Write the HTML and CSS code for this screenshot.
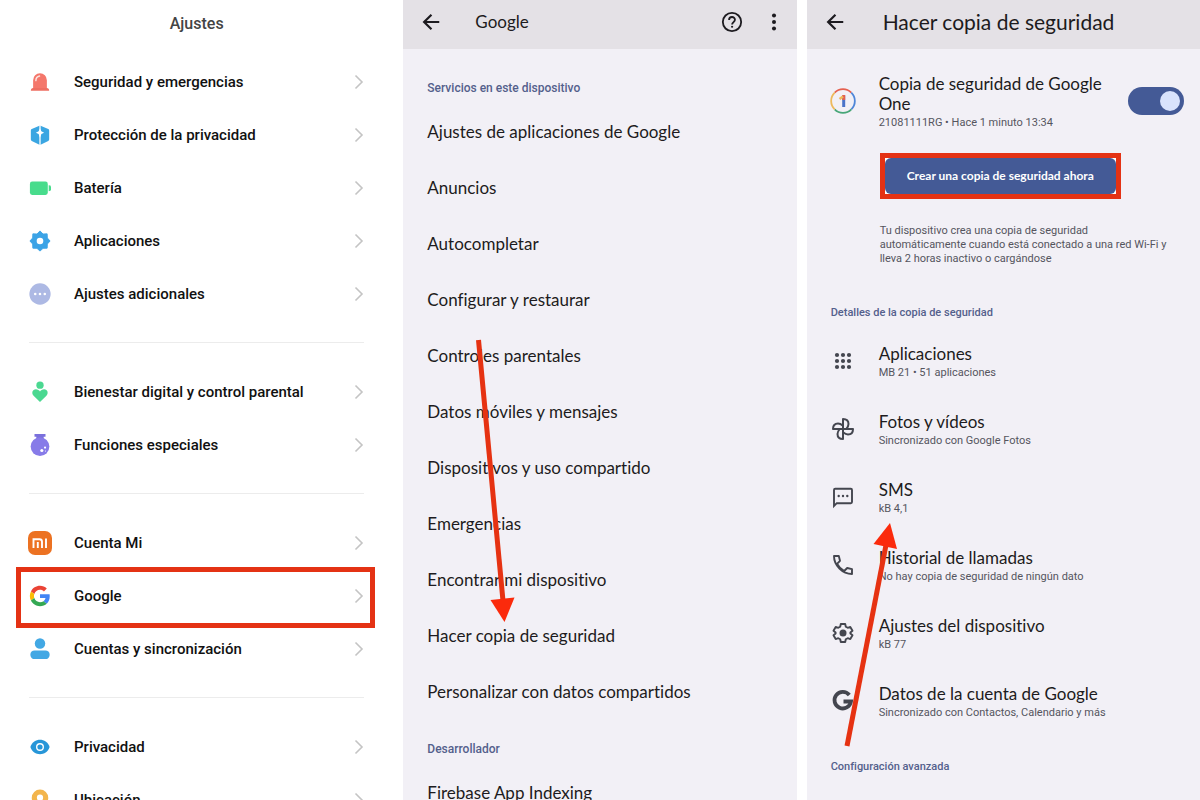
FILE: index.html
```html
<!DOCTYPE html>
<html lang="es">
<head>
<meta charset="utf-8">
<meta name="viewport" content="width=device-width, initial-scale=1">
<title>Ajustes</title>
<link rel="stylesheet" href="styles.css">
</head>
<body>
<svg class="defs" aria-hidden="true">
  <symbol id="chevron" viewBox="0 0 10 16"><path d="M1.500 1.500 8 8l-6.500 6.500" fill="none" stroke="#c4c4c4" stroke-width="1.600"/></symbol>
  <symbol id="back" viewBox="0 0 24 24"><path d="M21 12H5M12.500 4 4.500 12l8 8" fill="none" stroke="#1d1b20" stroke-width="2.400"/></symbol>
</svg>
<main class="screens">

  <section class="screen screen-settings">
    <h1 class="settings-title">Ajustes</h1>
    <nav class="group">
      <a class="row" href="#seguridad">
        <svg class="row-icon" viewBox="0 0 24 24"><path d="M4.500 19V10a7.500 7.500 0 0 1 15 0v9z" fill="#f4776b"/><path d="M2 21.500c0-2 1-3 2.500-3h15c1.500 0 2.500 1 2.500 3z" fill="#ee6e62"/><path d="M7.500 10.500C7.500 7.500 9 6 11.500 5.500" fill="none" stroke="#fde3df" stroke-width="1.600" stroke-linecap="round"/></svg>
        <span class="row-text">Seguridad y emergencias</span>
        <svg class="chevron"><use href="#chevron"/></svg>
      </a>
      <a class="row" href="#proteccion">
        <svg class="row-icon" viewBox="0 0 24 24"><path d="m12 1.500 9 4q1 .5 1 1.500v10q0 1-1 1.500l-9 4.500-9-4.500q-1-.5-1-1.500V7q0-1 1-1.500z" fill="#3ba6e2"/><path d="M12 1v22" stroke="#fff" stroke-width="1.400"/><path d="m12 5 1.500 3L16.500 9.500l-3 1.500L12 15l-1.500-4-3-1.500 3-1.500z" fill="#fff"/></svg>
        <span class="row-text">Protección de la privacidad</span>
        <svg class="chevron"><use href="#chevron"/></svg>
      </a>
      <a class="row" href="#bateria">
        <svg class="row-icon" viewBox="0 0 24 24"><rect x="1" y="5" width="19.500" height="14.500" rx="2.500" fill="#48dc8c"/><path d="M21.500 9q2.500 0 2.500 1.500V14q0 1.500-2.500 1.500z" fill="#48dc8c"/></svg>
        <span class="row-text">Batería</span>
        <svg class="chevron"><use href="#chevron"/></svg>
      </a>
      <a class="row" href="#aplicaciones">
        <svg class="row-icon" viewBox="0 0 24 24"><path d="m12 1 3.300 3.400 4.500-.2.200 4.500L23 12l-3 3.300-.2 4.500-4.500.2L12 23l-3.300-3-4.500-.2-.2-4.500L1 12l3-3.300.2-4.500 4.500.2z" fill="#3ba3e6" stroke="#3ba3e6" stroke-linejoin="round"/><circle cx="12" cy="12" r="3.600" fill="#fff"/></svg>
        <span class="row-text">Aplicaciones</span>
        <svg class="chevron"><use href="#chevron"/></svg>
      </a>
      <a class="row" href="#adicionales">
        <svg class="row-icon" viewBox="0 0 24 24"><circle cx="12" cy="12" r="11.600" fill="#adb9e4"/><g fill="#fff"><circle cx="6.800" cy="12" r="1.400"/><circle cx="12" cy="12" r="1.400"/><circle cx="17.200" cy="12" r="1.400"/></g></svg>
        <span class="row-text">Ajustes adicionales</span>
        <svg class="chevron"><use href="#chevron"/></svg>
      </a>
    </nav>
    <nav class="group">
      <a class="row" href="#bienestar">
        <svg class="row-icon" viewBox="0 0 24 24"><circle cx="12" cy="4.500" r="4" fill="#4bd891"/><path d="M12 23 5 16.200C2.500 13.500 3.500 9 7.500 9c2 0 3.500 1 4.500 2.500C13 10 14.500 9 16.500 9c4 0 5 4.500 2.500 7.200z" fill="#4bd891"/></svg>
        <span class="row-text">Bienestar digital y control parental</span>
        <svg class="chevron"><use href="#chevron"/></svg>
      </a>
      <a class="row" href="#funciones">
        <svg class="row-icon" viewBox="0 0 24 24"><path d="M6 0h12v3h-2v4H8V3H6z" fill="#7a70dc"/><circle cx="12" cy="13.700" r="10.200" fill="#877be8"/><g fill="#fff"><circle cx="14" cy="18" r="1.700"/><circle cx="17.500" cy="14.800" r="1.200"/><circle cx="18" cy="18.500" r=".6"/></g></svg>
        <span class="row-text">Funciones especiales</span>
        <svg class="chevron"><use href="#chevron"/></svg>
      </a>
    </nav>
    <nav class="group">
      <a class="row" href="#cuenta-mi">
        <svg class="row-icon row-icon-full" viewBox="0 0 24 24"><rect width="24" height="24" rx="7" fill="#ec7222"/><path d="M5.500 17V8.200h6q2.500 0 2.500 2.500V17M9.800 11v6M18 7.500V17" fill="none" stroke="#fff" stroke-width="1.900"/></svg>
        <span class="row-text">Cuenta Mi</span>
        <svg class="chevron"><use href="#chevron"/></svg>
      </a>
      <a class="row row-marked" href="#google">
        <svg class="row-icon" viewBox="-2 -2 52 52"><path fill="#ea4335" d="M24 9.500c3.540 0 6.710 1.220 9.210 3.600l6.850-6.850C35.900 2.380 30.470 0 24 0 14.620 0 6.510 5.380 2.560 13.220l7.980 6.190C12.430 13.720 17.740 9.500 24 9.500z"/><path fill="#4285f4" d="M46.980 24.550c0-1.570-.15-3.090-.38-4.550H24v9.020h12.940c-.58 2.960-2.260 5.480-4.780 7.180l7.730 6c4.510-4.180 7.090-10.360 7.090-17.650z"/><path fill="#fbbc05" d="M10.530 28.590c-.48-1.450-.76-2.990-.76-4.590s.27-3.140.76-4.590l-7.980-6.190C.92 16.460 0 20.120 0 24c0 3.880.92 7.540 2.560 10.780z"/><path fill="#34a853" d="M24 48c6.480 0 11.930-2.130 15.890-5.810l-7.730-6c-2.150 1.450-4.920 2.300-8.160 2.300-6.260 0-11.570-4.220-13.470-9.910l-7.980 6.190C6.510 42.620 14.620 48 24 48z"/></svg>
        <span class="row-text">Google</span>
        <svg class="chevron"><use href="#chevron"/></svg>
      </a>
      <a class="row" href="#cuentas">
        <svg class="row-icon" viewBox="0 0 24 24"><circle cx="12" cy="6" r="5.700" fill="#42a8e4"/><rect x="1.500" y="13.500" width="21" height="9.500" rx="4.500" fill="#42a8e4"/></svg>
        <span class="row-text">Cuentas y sincronización</span>
        <svg class="chevron"><use href="#chevron"/></svg>
      </a>
    </nav>
    <nav class="group">
      <a class="row" href="#privacidad">
        <svg class="row-icon" viewBox="0 0 24 24"><path d="M1.500 12C5 1.500 19 1.500 22.500 12 19 22.500 5 22.500 1.500 12z" fill="#2796d8"/><circle cx="12" cy="12" r="3.600" fill="none" stroke="#fff" stroke-width="1.500"/></svg>
        <span class="row-text">Privacidad</span>
        <svg class="chevron"><use href="#chevron"/></svg>
      </a>
      <a class="row" href="#ubicacion">
        <svg class="row-icon" viewBox="0 0 24 24"><path d="M12 24C7 20 3 15 3 9.500a9 9 0 0 1 18 0C21 15 17 20 12 24z" fill="#f3b54c"/><circle cx="12" cy="9.500" r="3.400" fill="#fff"/></svg>
        <span class="row-text">Ubicación</span>
        <svg class="chevron"><use href="#chevron"/></svg>
      </a>
    </nav>
  </section>

  <section class="screen screen-google">
    <header class="bar">
      <button class="icon-button" aria-label="Atrás"><svg class="bar-icon"><use href="#back"/></svg></button>
      <h2 class="bar-title bar-title-small">Google</h2>
      <button class="icon-button" aria-label="Ayuda"><svg class="bar-icon" viewBox="0 0 24 24"><circle cx="12" cy="12" r="10" fill="none" stroke="#1d1b20" stroke-width="2"/><path d="M8.800 9.800C8.800 5.500 15.200 5.500 15.200 9.600c0 2.400-3.100 2.600-3.100 5.200" fill="none" stroke="#1d1b20" stroke-width="2"/><circle cx="12.100" cy="17.200" r="1.200" fill="#1d1b20"/></svg></button>
      <button class="icon-button" aria-label="Más opciones"><svg class="bar-icon" viewBox="0 0 24 24"><g fill="#1d1b20"><circle cx="12" cy="5" r="2.200"/><circle cx="12" cy="12" r="2.200"/><circle cx="12" cy="19" r="2.200"/></g></svg></button>
    </header>
    <div class="services">
      <h3 class="label">Servicios en este dispositivo</h3>
      <a class="service" href="#ajustes-apps">Ajustes de aplicaciones de Google</a>
      <a class="service" href="#anuncios">Anuncios</a>
      <a class="service" href="#autocompletar">Autocompletar</a>
      <a class="service" href="#configurar">Configurar y restaurar</a>
      <a class="service" href="#parentales">Controles parentales</a>
      <a class="service" href="#datos">Datos móviles y mensajes</a>
      <a class="service" href="#dispositivos">Dispositivos y uso compartido</a>
      <a class="service" href="#emergencias">Emergencias</a>
      <a class="service" href="#encontrar">Encontrar mi dispositivo</a>
      <a class="service" href="#copia">Hacer copia de seguridad</a>
      <a class="service" href="#personalizar">Personalizar con datos compartidos</a>
      <h3 class="label">Desarrollador</h3>
      <a class="service" href="#firebase">Firebase App Indexing</a>
    </div>
    <svg class="arrow arrow-down" viewBox="0 0 40 284" aria-hidden="true"><path d="M5.500 1 30 262" stroke="#e63212" stroke-width="5"/><path d="m17.500 261 24-2.500L31.500 283z" fill="#fb2a0c"/></svg>
  </section>

  <section class="screen screen-backup">
    <header class="bar">
      <button class="icon-button" aria-label="Atrás"><svg class="bar-icon"><use href="#back"/></svg></button>
      <h2 class="bar-title">Hacer copia de seguridad</h2>
    </header>
    <div class="backup">
      <div class="account">
        <svg class="one-icon" viewBox="0 0 26 26" fill="none" stroke-width="1.800"><path d="M4.700 4.700A11.500 11.500 0 0 1 21.300 4.700" stroke="#e5604f"/><path d="M21.300 4.700A11.500 11.500 0 0 1 21.300 21.300" stroke="#4f86d8"/><path d="M21.300 21.300A11.500 11.500 0 0 1 4.700 21.300" stroke="#48a678"/><path d="M4.700 21.300A11.500 11.500 0 0 1 4.700 4.700" stroke="#edb95c"/><path d="M13.700 7.500V19" stroke="#4a73c9" stroke-width="3"/><path d="M13.700 7v5" stroke="#e5604f" stroke-width="3"/><path d="m9.500 11 3.500-2.500" stroke="#edb95c" stroke-width="2.500"/></svg>
        <label class="account-text" for="one-switch">
          <span class="item-title">Copia de seguridad de Google One</span>
          <span class="item-sub">21081111RG • Hace 1 minuto 13:34</span>
        </label>
        <input class="switch" id="one-switch" type="checkbox" role="switch" checked>
      </div>
      <div class="action">
        <div class="mark"><button class="primary">Crear una copia de seguridad ahora</button></div>
        <p class="note">Tu dispositivo crea una copia de seguridad automáticamente cuando está conectado a una red Wi-Fi y lleva 2 horas inactivo o cargándose</p>
      </div>
      <h3 class="label">Detalles de la copia de seguridad</h3>
      <a class="item" href="#b-apps">
        <svg class="item-icon" viewBox="0 0 24 24"><g fill="#44464f"><circle cx="6" cy="6" r="2.100"/><circle cx="12" cy="6" r="2.100"/><circle cx="18" cy="6" r="2.100"/><circle cx="6" cy="12" r="2.100"/><circle cx="12" cy="12" r="2.100"/><circle cx="18" cy="12" r="2.100"/><circle cx="6" cy="18" r="2.100"/><circle cx="12" cy="18" r="2.100"/><circle cx="18" cy="18" r="2.100"/></g></svg>
        <span class="item-text"><span class="item-title">Aplicaciones</span><span class="item-sub">MB 21 • 51 aplicaciones</span></span>
      </a>
      <a class="item" href="#b-fotos">
        <svg class="item-icon" viewBox="0 0 24 24" fill="none" stroke="#44464f" stroke-width="2" stroke-linejoin="round"><path id="blade" d="M12 12V2c3.500 0 5.500 2 5.500 5 0 2-1 3.500-2.200 5"/><use href="#blade" transform="rotate(90 12 12)"/><use href="#blade" transform="rotate(180 12 12)"/><use href="#blade" transform="rotate(270 12 12)"/></svg>
        <span class="item-text"><span class="item-title">Fotos y vídeos</span><span class="item-sub">Sincronizado con Google Fotos</span></span>
      </a>
      <a class="item" href="#b-sms">
        <svg class="item-icon" viewBox="0 0 24 24"><path d="M3 21V5q0-1.200 1.200-1.200h15.600q1.200 0 1.200 1.200v12q0 1.200-1.200 1.200H5.800z" fill="none" stroke="#44464f" stroke-width="1.900"/><g fill="#44464f"><circle cx="7.700" cy="11" r="1.200"/><circle cx="12" cy="11" r="1.200"/><circle cx="16.300" cy="11" r="1.200"/></g></svg>
        <span class="item-text"><span class="item-title">SMS</span><span class="item-sub">kB 4,1</span></span>
      </a>
      <a class="item" href="#b-llamadas">
        <svg class="item-icon" viewBox="0 0 24 24" fill="none" stroke="#44464f" stroke-width="1.900" stroke-linejoin="round"><path d="M3 3h4.800l1.200 4.800-3 3c1.700 3.300 4 5.500 7.200 7.200l3-3L21 16.200V21C11.500 21 3 12.500 3 3z"/></svg>
        <span class="item-text"><span class="item-title">Historial de llamadas</span><span class="item-sub">No hay copia de seguridad de ningún dato</span></span>
      </a>
      <a class="item" href="#b-ajustes">
        <svg class="item-icon" viewBox="0 0 24 24"><path d="M9.800 3h4.400l.6 2.700 1.900 1.100 2.600-.9 2.200 3.800-2.100 1.700v1.200l2.100 1.700-2.200 3.800-2.600-.9-1.900 1.100-.6 2.700H9.800l-.6-2.700-1.900-1.100-2.600.9-2.200-3.800 2.100-1.700v-1.200L2.500 9.700l2.200-3.800 2.600.9 1.900-1.100z" fill="none" stroke="#44464f" stroke-width="1.900" stroke-linejoin="round"/><circle cx="12" cy="12" r="3.500" fill="#44464f"/></svg>
        <span class="item-text"><span class="item-title">Ajustes del dispositivo</span><span class="item-sub">kB 77</span></span>
      </a>
      <a class="item" href="#b-cuenta">
        <svg class="item-icon" viewBox="0 0 24 24"><path d="M18.300 6A8.300 8.300 0 1 0 20 12.500H12.500" fill="none" stroke="#44464f" stroke-width="3.800"/></svg>
        <span class="item-text"><span class="item-title">Datos de la cuenta de Google</span><span class="item-sub">Sincronizado con Contactos, Calendario y más</span></span>
      </a>
      <h3 class="label">Configuración avanzada</h3>
    </div>
    <svg class="arrow arrow-up" viewBox="0 0 60 226" aria-hidden="true"><path d="M9 224 48 23" stroke="#e63212" stroke-width="5"/><path d="M35.500 22 59 27 52 1z" fill="#fb2a0c"/></svg>
  </section>

</main>
</body>
</html>
```
FILE: styles.css
```css
* { box-sizing: border-box; }

body {
  margin: 0;
  background: #fff;
  font-family: Roboto, "Liberation Sans", sans-serif;
  font-variant-ligatures: none;
  color: #1d1b20;
}

h1, h2, h3, p { margin: 0; }
a { color: inherit; text-decoration: none; }
.defs { display: none; }

.screens {
  display: grid;
  grid-template-columns: repeat(3, minmax(0, 1fr));
  gap: 10px;
  height: 100vh;
}

.screen {
  position: relative;
  overflow: hidden auto;
  scrollbar-width: none;
}

.screen-google, .screen-backup { background: #f2f0f6; }

/* Ajustes */
.settings-title {
  padding: 12px 0 20px;
  font-size: 16px;
  line-height: 23px;
  font-weight: 500;
  text-align: center;
  color: #444;
}

.group + .group::before {
  content: "";
  display: block;
  height: 1px;
  margin: 22px 29px;
  background: #ececec;
}

.row {
  position: relative;
  display: flex;
  align-items: center;
  height: 53px;
  padding: 0 29px 0 28px;
}

.row-icon {
  width: 24px;
  height: 24px;
  margin-right: 22px;
  padding: 1px;
}

.row-icon-full { padding: 0; }

.row-text {
  flex: 1;
  font-size: 15px;
  line-height: 20px;
  font-weight: 500;
  color: #111;
}

.chevron { width: 10px; height: 16px; }

.row-marked::after {
  content: "";
  position: absolute;
  inset: -2px 18px -6px 16px;
  border: 5px solid #e43214;
}

/* Barras superiores */
.bar {
  display: flex;
  align-items: center;
  height: 49px;
  padding: 0 11px 6px 16px;
  background: #e4e1e6;
}

.icon-button {
  display: flex;
  padding: 0;
  border: 0;
  background: none;
}

.icon-button + .icon-button { margin-left: 18px; }
.bar-icon { width: 24px; height: 24px; padding: 1px; }

.bar-title {
  flex: 1;
  margin-left: 36px;
  font-family: Lato, sans-serif;
  font-size: 21px;
  line-height: 28px;
  font-weight: 400;
}

.bar-title-small { margin-left: 32px; font-size: 17px; }

.label {
  padding: 19px 24px 6px;
  font-size: 12px;
  line-height: 20px;
  font-weight: 500;
  color: #54608c;
}

/* Google */
.services { padding-top: 10px; }

.service {
  display: block;
  padding: 16px 24px;
  font-family: Lato, sans-serif;
  font-size: 17px;
  line-height: 24px;
}

/* Copia de seguridad */
.backup { padding-top: 25px; }
.backup .label { padding-top: 20px; font-size: 11px; }

.account {
  display: flex;
  align-items: center;
  padding: 0 16px 0 23px;
}

.one-icon { width: 26px; height: 26px; margin: 0 23px 4px 0; }
.account-text { flex: 1; padding-right: 12px; }

.item-title, .item-sub { display: block; }

.item-title {
  font-family: Lato, sans-serif;
  font-size: 17px;
  line-height: 20px;
}

.item-sub {
  font-size: 11px;
  line-height: 18px;
  color: #55555e;
}

.switch {
  appearance: none;
  display: flex;
  align-items: center;
  justify-content: flex-end;
  width: 56px;
  height: 28px;
  margin: 0 0 4px;
  padding: 4px;
  border-radius: 14px;
  background: #445a96;
}

.switch::before {
  content: "";
  width: 20px;
  height: 20px;
  border-radius: 50%;
  background: #d9e3fc;
}

.switch:not(:checked) { justify-content: flex-start; }

.action { padding: 21px 24px 0 73px; }

.mark {
  width: fit-content;
  border: 5px solid #e43214;
  background: #fff;
}

.primary {
  display: block;
  padding: 8px 22px;
  border: 0;
  border-radius: 6px;
  background: #445a96;
  color: #fff;
  font-family: Lato, sans-serif;
  font-size: 12px;
  line-height: 20px;
  font-weight: 700;
}

.note {
  padding: 25px 0 17px;
  font-size: 11px;
  line-height: 14px;
  color: #55555e;
}

.item {
  display: flex;
  align-items: center;
  height: 68px;
  padding: 0 24px;
}

.item-icon { width: 24px; height: 24px; margin: 0 24px 4px 0; }

/* Flechas dibujadas sobre las listas */
.arrow { position: absolute; overflow: visible; pointer-events: none; }
.arrow-down { top: 339px; left: 70px; width: 40px; height: 284px; }
.arrow-up { top: 522px; left: 31px; width: 60px; height: 226px; }
```
